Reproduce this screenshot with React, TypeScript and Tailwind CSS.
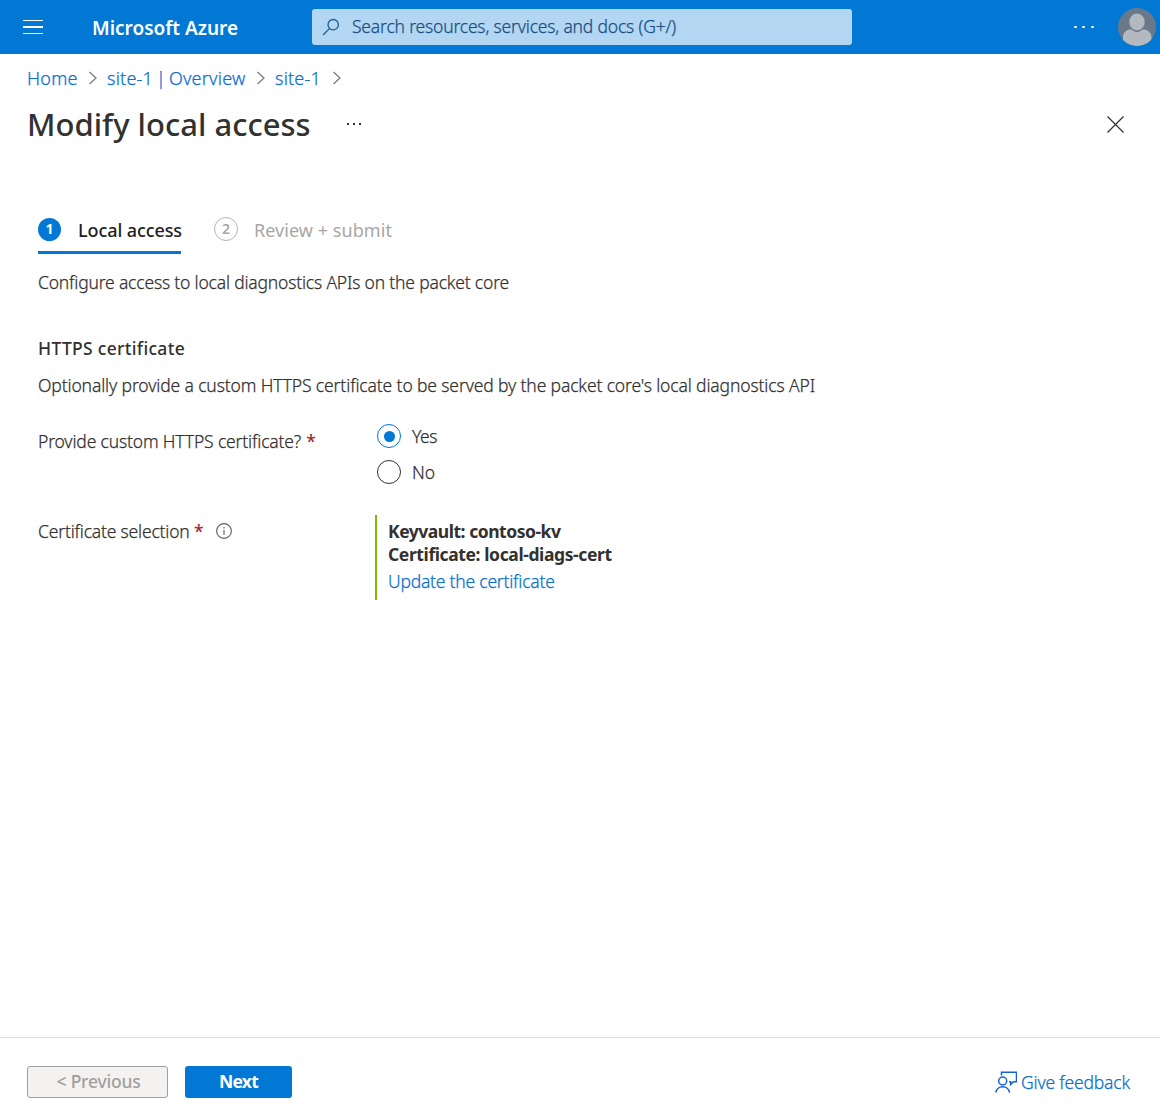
const regular = "font-light [-webkit-text-stroke:0.25px]";

function Chevron() {
  return (
    <svg className="h-4 w-2.5 shrink-0" viewBox="0 0 10 16" fill="none" stroke="#7a7876" strokeWidth="1.2">
      <path d="M1.5 2l6.500 6-6.500 6" />
    </svg>
  );
}

function Required() {
  return <span className="ml-[5px] font-medium text-[#a4262c]">*</span>;
}

function TopBar() {
  return (
    <header className="flex h-[54px] shrink-0 items-center bg-[#0078d4]">
      <button aria-label="Menu" className="ml-[23px] flex w-[19.5px] flex-col gap-[5px]">
        <span className="h-[1.5px] w-full bg-white" />
        <span className="h-[1.5px] w-full bg-white" />
        <span className="h-[1.5px] w-full bg-white" />
      </button>
      <span className="ml-[49.5px] w-[220px] pt-0.5 text-[19px] font-semibold text-white">Microsoft Azure</span>
      <div className="flex h-9 w-[540px] items-center rounded-[3px] bg-[#b3d6f2] pl-2.5 text-[#1a4f86]">
        <svg className="h-[18px] w-[18px]" viewBox="0 0 18 18" fill="none" stroke="#1d5c94" strokeWidth="1.3">
          <circle cx="11.2" cy="6.700" r="5.200" />
          <path d="M7.400 10.600L1 17" />
        </svg>
        <span className={`-mt-0.5 ml-3 tracking-[-0.186px] ${regular}`}>Search resources, services, and docs (G+/)</span>
      </div>
      <div className="ml-auto flex gap-[5.6px] pr-[24.5px]">
        <span className="size-[2.8px] rounded-full bg-white" />
        <span className="size-[2.8px] rounded-full bg-white" />
        <span className="size-[2.8px] rounded-full bg-white" />
      </div>
      <svg className="mr-1 h-[38px] w-[38px]" viewBox="0 0 38 38">
        <clipPath id="avatar"><circle cx="19" cy="19" r="19" /></clipPath>
        <g clipPath="url(#avatar)">
          <rect width="38" height="38" fill="#69798a" />
          <path d="M5 38V29c0-5 4-7.500 7.500-7.500 2.500 0 3 2.500 6.500 2.500s4-2.500 6.500-2.500c3.500 0 8 2.500 8 7.500v9z" fill="#b3b9be" />
          <ellipse cx="19" cy="14" rx="7.700" ry="8.500" fill="#b3b9be" />
        </g>
      </svg>
    </header>
  );
}

export default function App() {
  return (
    <div className="flex h-[1115px] w-[1160px] flex-col overflow-hidden bg-white font-['Noto_Sans','Open_Sans',sans-serif] text-[17.5px] leading-6 whitespace-nowrap text-[#323130]">
      <TopBar />
      <nav className={`mt-3 flex h-6 items-center pl-[27px] text-lg text-[#0b6fcf] ${regular}`}>
        <a className="w-[51px] tracking-[0.25px]">Home</a>
        <span className="mr-[9px] ml-[10px] flex"><Chevron /></span>
        <a className="w-[139px] tracking-[0.22px] [word-spacing:-2px]">site-1 | Overview</a>
        <span className="mr-[9px] ml-[10px] flex"><Chevron /></span>
        <a className="w-[46px] tracking-[0.203px]">site-1</a>
        <span className="ml-[11px] flex"><Chevron /></span>
      </nav>
      <div className="mt-3 flex h-11 items-center pr-9 pl-[27px]">
        <h1 className="w-[284px] pb-px text-[31px] font-medium tracking-[0.02px]">Modify local access</h1>
        <div className="ml-9 flex gap-1">
          <span className="size-[2px] bg-[#323130]" />
          <span className="size-[2px] bg-[#323130]" />
          <span className="size-[2px] bg-[#323130]" />
        </div>
        <svg className="ml-auto h-[17px] w-[17px]" viewBox="0 0 17 17" stroke="#323130" strokeWidth="1.2">
          <path d="M.5.5l16 16M16.500.5l-16 16" />
        </svg>
      </div>
      <main className="flex flex-col pl-[38px]">
        <div className="mt-[70px] flex h-[37px] items-start gap-[33px] text-lg">
          <div className="flex h-[37.5px] w-[143px] border-b-3 border-[#0078d4]">
            <span className="mt-[1.5px] mr-[17px] flex size-[23px] shrink-0 items-center justify-center rounded-full bg-[#0078d4] text-sm font-bold text-white">1</span>
            <span className="font-medium tracking-[-0.091px] text-[#201f1e]">Local access</span>
          </div>
          <div className="flex text-[#a8a6a4]">
            <span className="mt-px mr-4 flex size-6 items-center justify-center rounded-full border-[1.5px] border-[#b5b3b1] text-sm font-semibold">2</span>
            <span className="font-normal tracking-[0.055px]">Review + submit</span>
          </div>
        </div>
        <p className={`mt-[17px] tracking-[-0.188px] ${regular}`}>Configure access to local diagnostics APIs on the packet core</p>
        <h2 className="mt-[42px] font-medium tracking-[0.31px]">HTTPS certificate</h2>
        <p className={`mt-[13px] tracking-[-0.132px] ${regular}`}>Optionally provide a custom HTTPS certificate to be served by the packet core's local diagnostics API</p>
        <div className="mt-[27px] flex">
          <div className="w-[339px] pt-[5px]"><span className={`tracking-[-0.16px] ${regular}`}>Provide custom HTTPS certificate?</span><Required /></div>
          <div className={`flex flex-col gap-3 ${regular}`}>
            <label className="flex items-center gap-[11px]">
              <span className="flex size-6 items-center justify-center rounded-full border border-[#0078d4]"><span className="size-[11px] rounded-full bg-[#0078d4]" /></span>
              <span className="tracking-[-0.45px]">Yes</span>
            </label>
            <label className="flex items-center gap-[11px]">
              <span className="size-6 rounded-full border border-[#323130]" />
              <span>No</span>
            </label>
          </div>
        </div>
        <div className="mt-[31px] flex">
          <div className="flex h-8 w-[337px] items-center">
            <span className={`w-[151px] tracking-[-0.19px] ${regular}`}>Certificate selection</span><Required />
            <svg className="ml-3 h-4 w-4" viewBox="0 0 16 16" fill="none" stroke="#605e5c" strokeWidth="1.1">
              <circle cx="8" cy="8" r="7.400" />
              <path d="M8 7v5M8 4v1.500" />
            </svg>
          </div>
          <div className="flex h-[85px] flex-col border-l-2 border-[#7fba00] pt-[5px] pl-[11px]">
            <span className="leading-[23px] font-bold tracking-[-0.47px]">Keyvault: contoso-kv</span>
            <span className="leading-[23px] font-bold tracking-[-0.39px]">Certificate: local-diags-cert</span>
            <a className={`mt-[3px] tracking-[-0.22px] text-[#0b6fcf] ${regular}`}>Update the certificate</a>
          </div>
        </div>
      </main>
      <footer className="mt-auto flex h-[78px] shrink-0 items-start border-t border-[#dcdcdc] pt-7 pl-[27px]">
        <button className="flex h-8 w-[141px] items-center justify-center rounded-[3px] border border-[#a19f9d] bg-[#f3f2f1] pb-[3px] pl-0.5 font-medium tracking-[-0.21px] text-[#a19f9d]">{"< Previous"}</button>
        <button className="ml-[17px] flex h-8 w-[107px] items-center justify-center rounded-[3px] bg-[#0078d4] pb-[3px] font-bold tracking-[-0.76px] text-white">Next</button>
        <a className={`mr-[30px] ml-auto flex items-center gap-1 pt-1 text-[#0b6fcf] ${regular}`}>
          <svg className="h-[22px] w-[22px]" viewBox="0 0 22 22" fill="none" stroke="#0f62d8" strokeWidth="1.500">
            <circle cx="7.700" cy="10" r="4" />
            <path d="M.8 21.500a7 7 0 0 1 13.800 0M6.500 4.500V1.200h15v9.500h-3l-2.800 2.800v-2.800h-1.600" />
          </svg>
          <span className="w-[109px] tracking-[-0.18px]">Give feedback</span>
        </a>
      </footer>
    </div>
  );
}
